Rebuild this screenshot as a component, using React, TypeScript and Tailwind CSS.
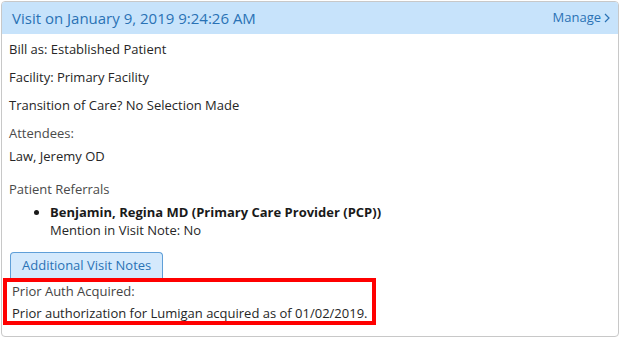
export default function App() {
  return (
    <div className="w-[621px] h-[340px] bg-white p-px font-['Open_Sans',sans-serif] text-[13px] text-[#262626]">
      <div className="w-[618px] h-[336px] border border-[#c8c8c8] rounded-[4px] overflow-hidden flex flex-col">
        <div className="h-[32px] bg-[#c7e3fb] flex items-center justify-between pl-[10px] pr-[8px] shrink-0">
          <span className="text-[15px] text-[#2a72b5]">Visit on January 9, 2019 9:24:26 AM</span>
          <span className="text-[13px] text-[#2a72b5] flex items-center gap-[3px]">
            Manage
            <svg width="6" height="10" viewBox="0 0 6 10" fill="none" stroke="#2a72b5" strokeWidth="1.2">
              <path d="M1 1l4 4-4 4" />
            </svg>
          </span>
        </div>
        <div className="flex flex-col pt-[6px]">
          <p className="pl-[7px] leading-[18px]">Bill as: Established Patient</p>
          <p className="pl-[7px] leading-[18px] mt-[10px]">Facility: Primary Facility</p>
          <p className="pl-[7px] leading-[18px] mt-[10px]">Transition of Care? No Selection Made</p>
          <p className="pl-[7px] leading-[18px] mt-[10px] text-[#4a4a4a]">Attendees:</p>
          <p className="pl-[7px] leading-[18px] mt-[5px]">Law, Jeremy OD</p>
          <p className="pl-[7px] leading-[18px] mt-[15px] text-[#4a4a4a]">Patient Referrals</p>
          <ul className="pl-[48px] mt-[5px] list-disc">
            <li className="leading-[18px] font-bold text-[#1a1a1a]">Benjamin, Regina MD (Primary Care Provider (PCP))</li>
          </ul>
          <p className="pl-[48px] leading-[18px]">Mention in Visit Note: No</p>
          <div className="pl-[8px] mt-[13px]">
            <button className="h-[26px] px-[11px] bg-[#d4e9fc] border border-[#5f9fd8] border-b-0 rounded-t-[4px] text-[13px] text-[#2a72b5]">
              Additional Visit Notes
            </button>
          </div>
          <div className="ml-px w-[373px] h-[47px] border-4 border-[#ff0000] pl-[5px]">
            <p className="leading-[18px] text-[#444]">Prior Auth Acquired:</p>
            <p className="leading-[18px] mt-[4px]">Prior authorization for Lumigan acquired as of 01/02/2019.</p>
          </div>
        </div>
      </div>
    </div>
  );
}
